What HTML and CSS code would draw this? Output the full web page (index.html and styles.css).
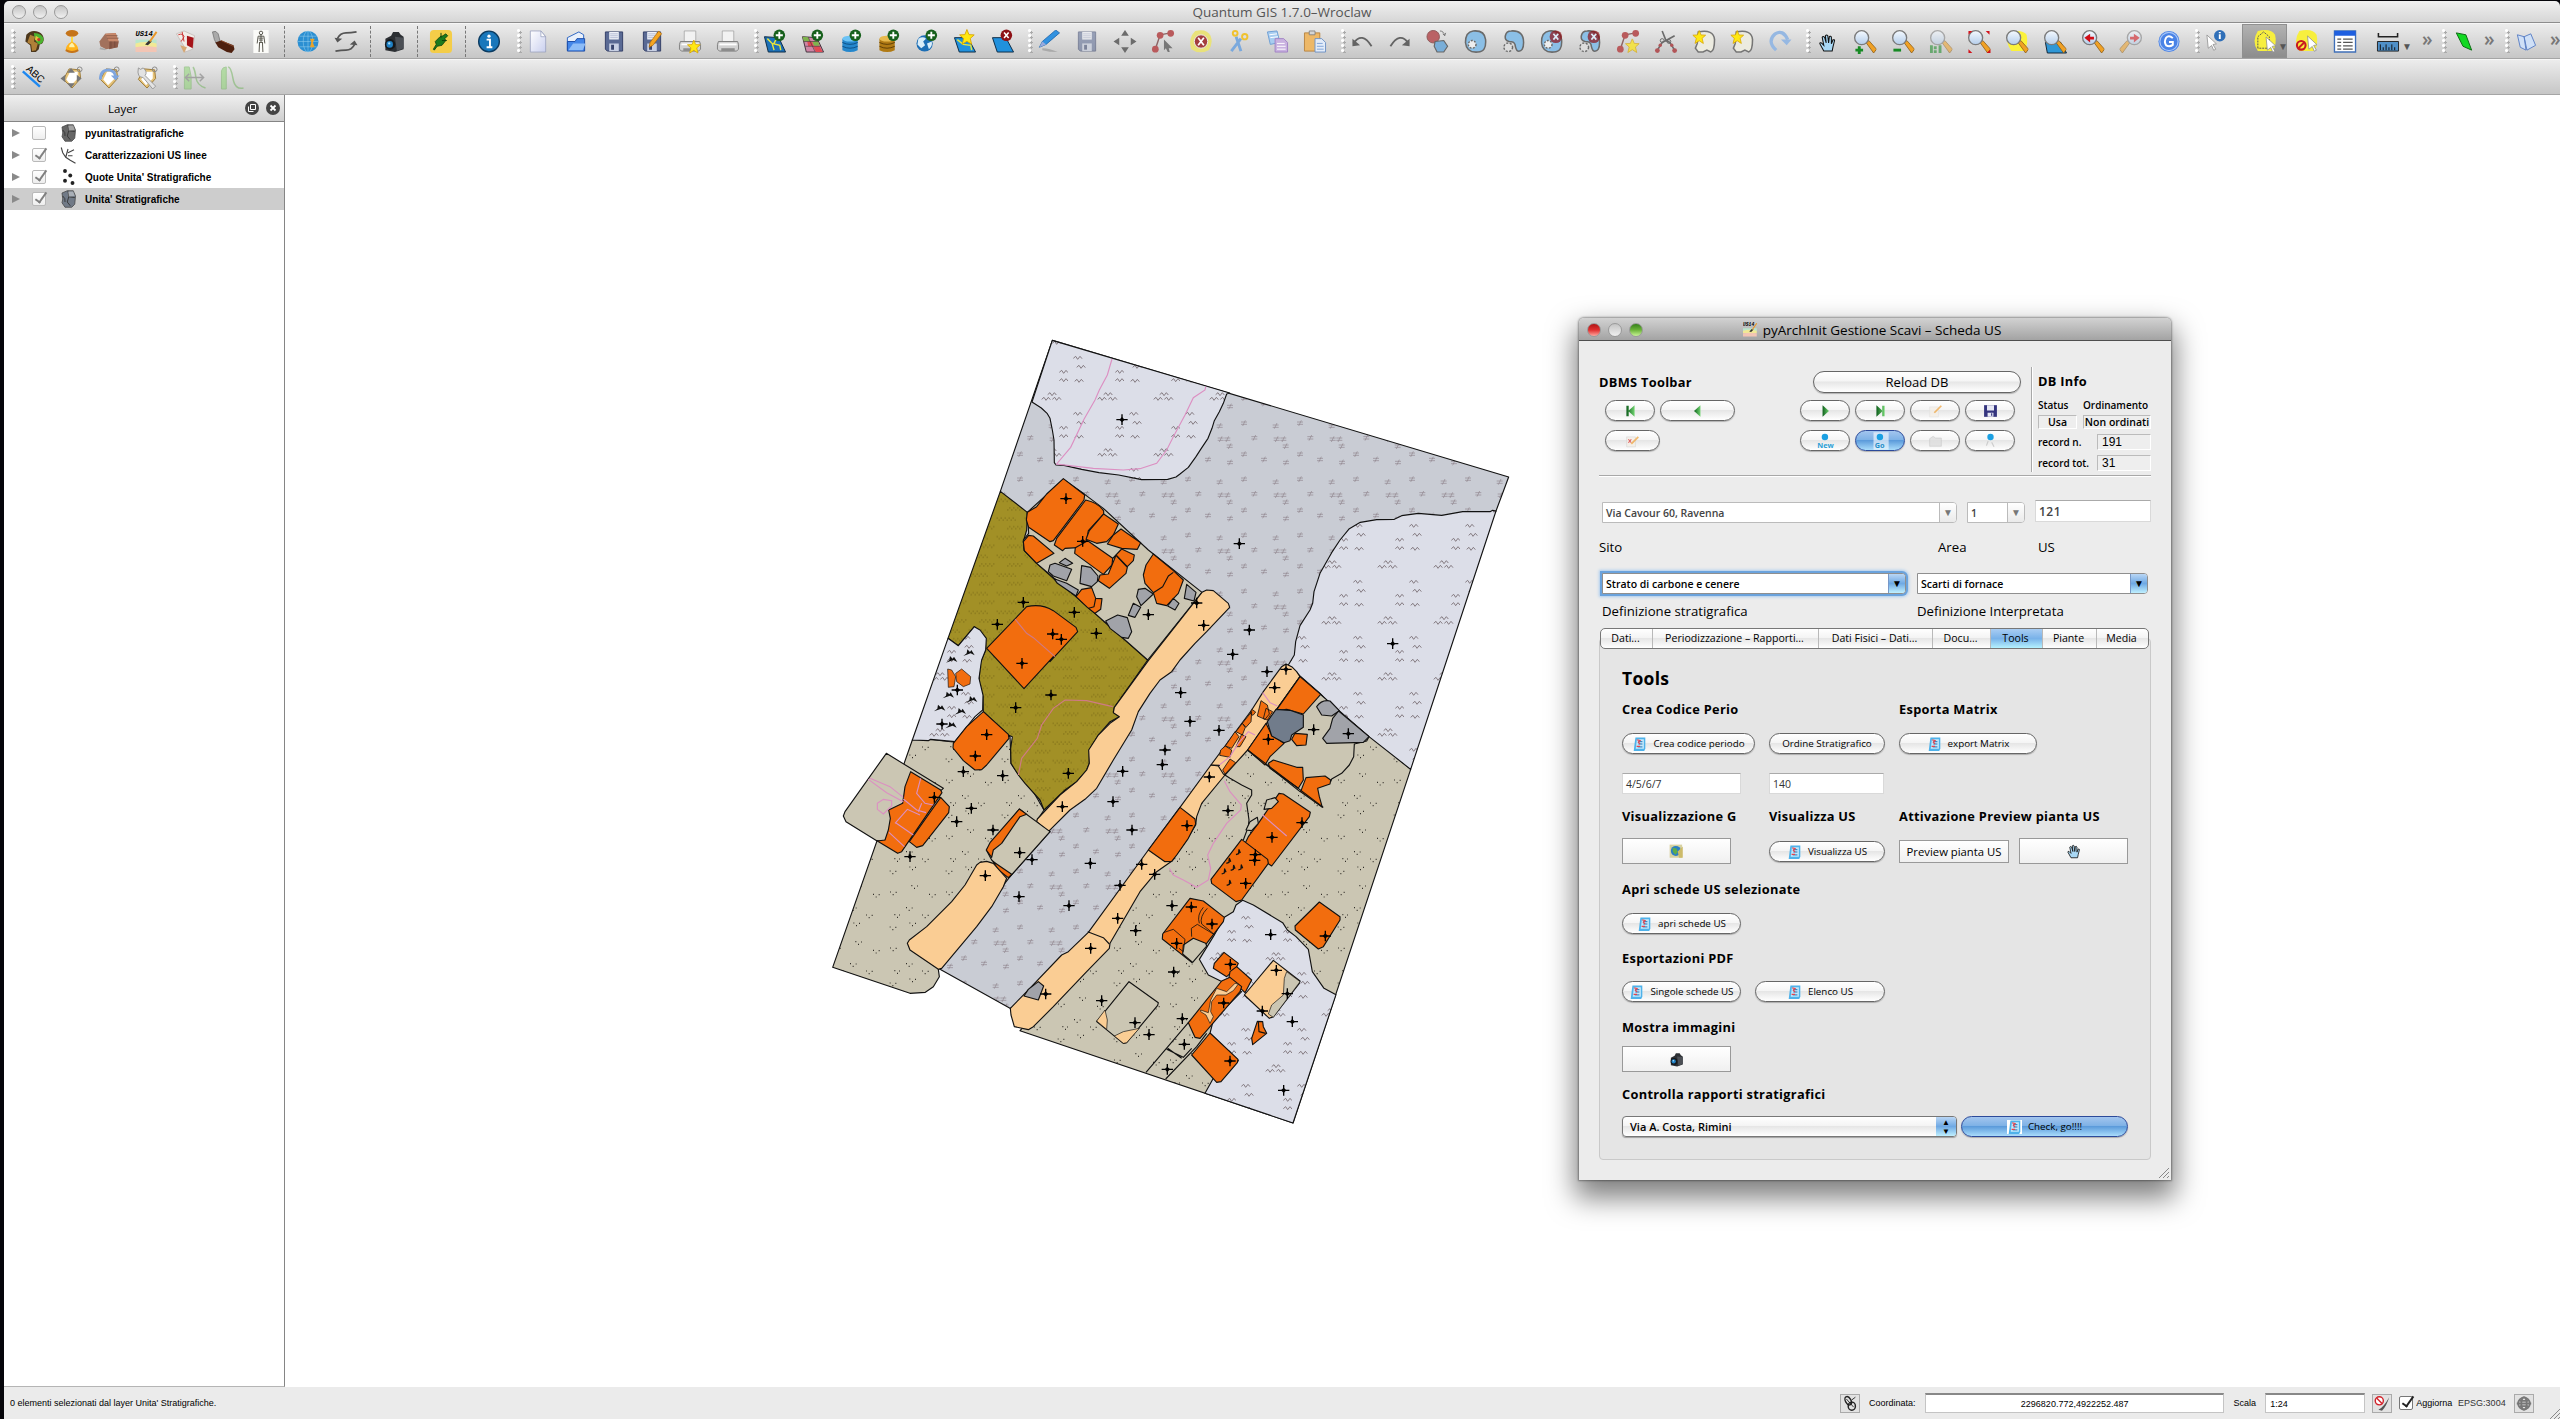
FILE: index.html
```html
<!DOCTYPE html>
<html lang="it">
<head>
<meta charset="utf-8">
<title>Quantum GIS 1.7.0–Wroclaw</title>
<link rel="stylesheet" href="styles.css">
</head>
<body>
<svg class="defs" width="0" height="0" aria-hidden="true">
<defs>
<linearGradient id="sheet" x1="0" y1="0" x2="1" y2="1"><stop offset="0" stop-color="#fff"/><stop offset="1" stop-color="#c9cfee"/></linearGradient>
<linearGradient id="glass" x1="0" y1="0" x2="0" y2="1"><stop offset="0" stop-color="#f5faff"/><stop offset="1" stop-color="#b4cdea"/></linearGradient>
<linearGradient id="leaf" x1="0" y1="0" x2="1" y2="0"><stop offset="0" stop-color="#0e5f1c"/><stop offset="1" stop-color="#6fd36f"/></linearGradient>
<symbol id="plus" viewBox="0 0 12 12"><circle cx="6" cy="6" r="5.6" fill="#17601c"/><path d="M6 2.6v6.8M2.6 6h6.8" stroke="#fff" stroke-width="1.8"/></symbol>
<symbol id="kill" viewBox="0 0 12 12"><circle cx="6" cy="6" r="5.6" fill="#8d1015"/><path d="M3.8 3.4l4.4 5.2M8.2 3.4L3.8 8.6" stroke="#fff" stroke-width="1.5"/></symbol>
<symbol id="star" viewBox="0 0 12 12"><path d="M6 0l1.6 4 4.2.2-3.2 2.8 1.1 4.6L6 9.2l-3.700 2.400 1.100-4.600L.2 4.200l4.200-.2z" fill="#ffe812" stroke="#d9a400" stroke-width=".7"/></symbol>
<symbol id="mask" viewBox="0 0 24 24"><path d="M4 5q5-6 13-3 6 3 5 9-1 4-4 4l-1 5-3 3H9l-1-7-5-4z" fill="#4c371c"/><path d="M12 3q9 0 10 7-1 5-5 5-5-4-5-12z" fill="#4bb32f"/><path d="M8 5l5 2-1 5 4 2-2 7-4 1-1-7-4-2z" fill="#b08038"/><path d="M14 6l3 2-1 4-3-2z" fill="#e9c23a"/><circle cx="17" cy="10" r="1.700" fill="#c9362a"/></symbol>
<symbol id="hourglass" viewBox="0 0 24 24"><ellipse cx="12" cy="3.500" rx="6.500" ry="3.500" fill="#c5741a"/><path d="M11 7h2v6h-2z" fill="#ffda3a"/><path d="M12 12q7 4 6.500 9-6.500 5-13 0Q5 16 12 12z" fill="#ffb31c"/><path d="M12 13q3 3 3 5l-6 0q0-3 3-5z" fill="#fff3a8"/><path d="M5.500 21q6.500 4 13 0" stroke="#c5741a" stroke-width="2" fill="none"/></symbol>
<symbol id="house" viewBox="0 0 24 24"><path d="M2 12l6-8 11-1 3 9-1 6-12 2-6-3z" fill="#a2715c"/><path d="M8 4l11-1 3 9H12z" fill="#c9896b"/><path d="M12 12h10l-1 6-9 2z" fill="#8d5a48"/><path d="M9 6h12M10 8.500h12M14 12v7M18 12v6" stroke="#6d4536" stroke-width=".7"/><path d="M3 18l6 2-1 1-6-1z" fill="#aaa"/></symbol>
<symbol id="us14" viewBox="0 0 24 24"><text x="0" y="6" font-size="7.500" font-weight="bold" font-style="italic" font-family="Liberation Mono">US14</text><path d="M0 10h22v5H0z" fill="#b9e6cc"/><path d="M0 14q11-3 22 0v4H0z" fill="#f1e995"/><path d="M0 18q11-2 22 0v5H0z" fill="#f3c5b4"/><path d="M10 15l4-4 3 1-4 4z" fill="#333"/><path d="M15 12l7-10" stroke="#e9972a" stroke-width="2"/></symbol>
<symbol id="card" viewBox="0 0 24 24"><path d="M3 4l8-3 11 5-2 14-8 3-1-6z" fill="#f1ece8" stroke="#b7aca6" stroke-width=".6"/><path d="M14 6l7 2-1 11-6-3z" fill="#a51218"/><path d="M5 5q5-2 6 2l-3 5M9 2l2 10" stroke="#c33" fill="none"/><path d="M7 16l7 2-3 6z" fill="#d6a773"/></symbol>
<symbol id="trowel" viewBox="0 0 24 24"><path d="M1 2q4-2 6 2l2 8-4 2-2-4z" fill="#aaa" stroke="#666" stroke-width=".7"/><path d="M4 13l6-2 13 5 1 4-3 4-5-1-9-5z" fill="#4e200f"/><path d="M10 11l13 6" stroke="#8c4a2c"/></symbol>
<symbol id="skeleton" viewBox="0 0 24 24"><path d="M4 0h16v24H4z" fill="#fbfbf8"/><g stroke="#55544a" fill="none"><circle cx="12" cy="3" r="1.800"/><path d="M12 5v8M9 6.500h6M9.500 8.500h5M10 10.500h4M9 6.500L8 14M15 6.500L16 14M10 13h4M10.500 13l-.5 10M13.500 13l.5 10"/></g></symbol>
<symbol id="globe" viewBox="0 0 24 24"><circle cx="12" cy="12" r="11" fill="#2b8fd2"/><g stroke="#9fd4f0" fill="none" stroke-width=".5"><ellipse cx="12" cy="12" rx="5" ry="11"/><path d="M1 12h22M3 6.500h18M3 17.500h18M12 1v22"/></g><path d="M14 9h5l-2 4 2 5h-5l1.500-5z" fill="#eaa42a"/></symbol>
<symbol id="sync" viewBox="0 0 24 24"><g fill="none" stroke="#555" stroke-width="1.800"><path d="M3 9q3-6 9-6 5 0 11-1M21 15q-3 6-9 6-5 0-11 1"/></g><path d="M0 8l3 5 5-4zM24 16l-3-5-5 4z" fill="#555"/></symbol>
<symbol id="camera" viewBox="0 0 24 24"><path d="M3 9l6-3 2-4h6l2 3 3 2v13l-9 3-10-2z" fill="#2c2f33"/><path d="M13 7l9 1v11l-7 3z" fill="#4b4f55"/><circle cx="8" cy="15" r="5.500" fill="#15181b"/><circle cx="7.500" cy="15" r="3.400" fill="#1f80c4"/><circle cx="7" cy="14" r="1.200" fill="#a7dcf7"/></symbol>
<symbol id="plug" viewBox="0 0 24 24"><rect x=".5" y="0" width="23" height="24" rx="4" fill="#f4cd48"/><path d="M17 4l2 2-3 3 1 2-4 5-5 1-3 4-1-1 3-5-1-3 5-5 3-1z" fill="#1d7a1c" stroke="#0b3f0b" stroke-width=".8"/><path d="M12 3v5M18 11h-5" stroke="#0b3f0b"/></symbol>
<symbol id="info" viewBox="0 0 24 24"><circle cx="12" cy="12" r="10.800" fill="#1877bb" stroke="#0b3b61" stroke-width="1.400"/><circle cx="12" cy="6.500" r="1.700" fill="#fff"/><path d="M9.500 10h3.500v7.500M9.500 18h6" stroke="#fff" stroke-width="2" fill="none"/></symbol>
<symbol id="doc" viewBox="0 0 24 24"><path d="M4 1h11l5 6v16H4z" fill="url(#sheet)" stroke="#98a0bd" stroke-width=".8"/><path d="M15 1v6h5z" fill="#fff" stroke="#98a0bd" stroke-width=".8"/></symbol>
<symbol id="open" viewBox="0 0 24 24"><path d="M3 8L15 2l5 3v16H3z" fill="#e9f0fb" stroke="#2a63c2"/><path d="M3 22V12h8l2-3h8v13z" fill="#4486e8" stroke="#1b4ba6"/><path d="M4 21l5-7h13l-3 7z" fill="#8dbcf7"/></symbol>
<symbol id="save" viewBox="0 0 24 24"><path d="M3 2h18v20H5l-2-2z" fill="#5a6a94" stroke="#323f66"/><path d="M7 2h10v8H7z" fill="#eef1f8"/><path d="M8 4h8M8 6h8M8 8h8" stroke="#9aa5c4" stroke-width=".7"/><path d="M7 14h10v8H7z" fill="#c8d0e4"/><path d="M9 15.500h3v5H9z" fill="#38456e"/></symbol>
<symbol id="pencil" viewBox="0 0 24 24"><path d="M9 18l1-5L19 1l3 3-9 12z" fill="#f5a623" stroke="#a86406" stroke-width=".7"/></symbol>
<symbol id="print" viewBox="0 0 24 24"><path d="M6 1h12v11H6z" fill="#f2f2f2" stroke="#999" stroke-width=".7"/><path d="M2 12h20l1 3v5l-2 2H3l-2-2v-5z" fill="#d2d2d2" stroke="#777" stroke-width=".9"/><path d="M3 15h18" stroke="#fff" stroke-width="2"/><path d="M5 19h14v3H5z" fill="#8c8c8c"/></symbol>
<symbol id="vlayer" viewBox="0 0 24 24"><path d="M1 7l15 1 7 15H5z" fill="#1c70b8" stroke="#0c2a44"/><path d="M4 9l5 5 8 2 1 5M9 14l2 7M13 10l-2 4" stroke="#e7e63a" stroke-width="1.500" fill="none"/></symbol>
<symbol id="rlayer" viewBox="0 0 24 24"><path d="M1 7l15 1 7 15H5z" fill="#cf86a6" stroke="#40303a"/><path d="M1 7l6 .5 2 4.500-6.500 0zM11 12l6-.5 2 5-6 0z" fill="#7eb34c"/><path d="M6 12l5 0 2 5-6 0zM12 17h7l3 6h-7z" fill="#df4a54"/><path d="M2.500 12h15.500M4 17h16M7 7.500l7 15" stroke="#40303a" stroke-width=".6"/></symbol>
<symbol id="dbblue" viewBox="0 0 24 24"><path d="M3 9v12q8 4 16 0V9z" fill="#2587cc"/><ellipse cx="11" cy="9" rx="8" ry="3" fill="#6cc3f5"/><path d="M3 13q8 4 16 0M3 17q8 4 16 0" stroke="#0c4f86" fill="none"/></symbol>
<symbol id="dbgold" viewBox="0 0 24 24"><path d="M2 9v12q8 4 16 0V9z" fill="#b07a14"/><ellipse cx="10" cy="9" rx="8" ry="3" fill="#e7b94d"/><path d="M2 13q8 4 16 0M2 17q8 4 16 0" stroke="#5e3e05" fill="none"/></symbol>
<symbol id="wms" viewBox="0 0 24 24"><circle cx="9.500" cy="14" r="8.500" fill="#1c6eb5"/><path d="M3 9q5-3 8 0l-3 3 2 4-4 3-4-4zM12 14l5-2q1 5-3 8z" fill="#d8ecf8"/></symbol>
<symbol id="blayer" viewBox="0 0 24 24"><path d="M1 8l14 0 8 15H6z" fill="#2191dd" stroke="#0c2a44"/></symbol>
<symbol id="pen" viewBox="0 0 24 24"><path d="M5 19q8 0 16 4-9 0-16-2z" fill="#aaa"/><path d="M2 18l3-6L19 0l4 3L9 15z" fill="#3292e0" stroke="#1b62a8" stroke-width=".8"/><path d="M2 18l3-6 4 3z" fill="#9ad"/></symbol>
<symbol id="move" viewBox="0 0 24 24"><path d="M12 0l4 6H8zM12 24l4-6H8zM0 12l6-4v8zM24 12l-6-4v8z" fill="#6c6c6c"/></symbol>
<symbol id="nodes" viewBox="0 0 24 24"><path d="M4 20L9 5l11-2" stroke="#8d6565" stroke-width="1.500" fill="none"/><g fill="#b95a5c"><circle cx="4" cy="20" r="3.500"/><circle cx="9" cy="5.500" r="3.500"/><circle cx="20" cy="3.500" r="3.500"/></g></symbol>
<symbol id="delsel" viewBox="0 0 24 24"><path d="M6 1q12-3 16 5 3 8-2 15-10 5-18-1-4-11 4-19z" fill="#e9e27a"/><circle cx="12" cy="12" r="7" fill="#a33e3e" stroke="#eee"/><path d="M9 8l6 8M15 8l-6 8" stroke="#fff" stroke-width="1.800"/></symbol>
<symbol id="cut" viewBox="0 0 24 24"><path d="M9 7l5 15M14 9L4 22" stroke="#7aa9dd" stroke-width="3"/><g fill="none" stroke="#f0c22f" stroke-width="2"><circle cx="8" cy="3.500" r="2.500"/><circle cx="18" cy="7" r="2.800"/></g></symbol>
<symbol id="copy" viewBox="0 0 24 24"><path d="M2 2l10-1 3 12-10 2z" fill="#a8cdf0" stroke="#6f9fd4"/><path d="M10 9h9l4 4v10H10z" fill="#c9b2e0" stroke="#a183c4"/><path d="M4 5l8-1M5 8l8-1M12 14h8M12 17h9M12 20h9" stroke="#fff"/></symbol>
<symbol id="paste" viewBox="0 0 24 24"><path d="M1 3h16v19H1z" fill="#edb868" stroke="#b98643"/><path d="M6 1h6v4H6z" fill="#d5d5d5" stroke="#777" stroke-width=".8"/><path d="M12 9h7l4 4v10H12z" fill="#e3ecf9" stroke="#6f92c4"/><path d="M14 14h6M14 17h7M14 20h7" stroke="#7fa4d8"/></symbol>
<symbol id="undo" viewBox="0 0 24 24"><path d="M3 14q9-13 19 3" stroke="#636363" stroke-width="1.900" fill="none"/><path d="M2 9l0 8 8-1z" fill="#636363"/></symbol>
<symbol id="simplify" viewBox="0 0 24 24"><circle cx="7" cy="7" r="6.500" fill="#ba6265" stroke="#8f5a5a"/><path d="M9 12l9-1 4 6-4 6h-7l-3-6z" fill="#79aed8" stroke="#666" stroke-width="1.200"/><path d="M14 1q4 0 5 5M17 4l2 2 1-3" stroke="#777" fill="none"/></symbol>
<symbol id="blob" viewBox="0 0 24 24"><path d="M9 1q12-1 13 9 1 13-8 13-12 1-13-10Q1 2 9 1z" fill="#8bbfe6" stroke="#6a6a6a" stroke-width="1.600"/><circle cx="8" cy="15" r="4" fill="#eee" stroke="#6a6a6a" stroke-width="1.500" stroke-dasharray="2 1.400"/></symbol>
<symbol id="blob2" viewBox="0 0 24 24"><path d="M9 1q13-1 13 12 0 10-6 9-2-1-3-7-1-3-6-3-5-1-4-6 1-5 6-5z" fill="#8bbfe6" stroke="#6a6a6a" stroke-width="1.600"/><circle cx="6" cy="18" r="4.500" fill="#ddd" stroke="#6a6a6a" stroke-width="1.500" stroke-dasharray="2.200 1.500"/></symbol>
<symbol id="scissor" viewBox="0 0 24 24"><path d="M3 21l5-8 4-2 9-5M21 21l-5-8-4-2-4-10" stroke="#6b6b6b" stroke-width="1.700" fill="none"/><circle cx="8" cy="11" r="2" fill="none" stroke="#6b6b6b"/><circle cx="15" cy="12" r="2" fill="none" stroke="#6b6b6b"/><g fill="#b25558"><circle cx="3" cy="21.500" r="2.500"/><circle cx="21" cy="21.500" r="2.500"/><circle cx="18" cy="16" r="1.800"/><circle cx="6" cy="16" r="1.800"/></g></symbol>
<symbol id="merge" viewBox="0 0 24 24"><path d="M6 2q16-3 17 8 0 12-4 13l-4-2-4 2H6l-3-4 2-5z" fill="#ecebe0" stroke="#757575" stroke-width="1.600"/><use href="#star" x="0" y="0" width="14" height="15"/></symbol>
<symbol id="rotate" viewBox="0 0 24 24"><path d="M8 21Q-2 12 7 4q8-5 13 6" stroke="#96b8e2" stroke-width="3.500" fill="none"/><path d="M13 10h11l-5 6z" fill="#96b8e2"/></symbol>
<symbol id="hand" viewBox="0 0 24 24"><path d="M8 22l-5-9q0-2 2-1l3 3L6 5q1-2 3 0l2 7-1-9q1.500-2 3 0l1 9 1-8q2-1 2.500 1l0 8 2-5q2-.5 2 1l-2 8-1 5z" fill="#a9d8f5" stroke="#111" stroke-width="1.300"/></symbol>
<symbol id="lens" viewBox="0 0 24 24"><path d="M13 13l3-2 8 9-3 4z" fill="#f0a125" stroke="#8a5a14" stroke-width=".8"/><circle cx="8.500" cy="8" r="7.300" fill="url(#glass)" stroke="#7b7b7b" stroke-width="1.400"/></symbol>
<symbol id="cursor" viewBox="0 0 24 24"><path d="M5 1l14 13-5 1 4 7-3 1.500-3-7-5 4z" fill="#fff" stroke="#8a8a8a" stroke-width="1.100"/></symbol>
<symbol id="google" viewBox="0 0 24 24"><circle cx="12" cy="12" r="11" fill="#4a83e6"/><circle cx="12" cy="12" r="9.500" fill="none" stroke="#a9c6f7" stroke-width="1.200"/><path d="M16 8.500Q12 5 9 8q-2.500 4 0 8 3.500 2 7-.5V12.500H12" stroke="#fff" stroke-width="2" fill="none"/></symbol>
<symbol id="table" viewBox="0 0 24 24"><path d="M1 1h22v22H1z" fill="#fff" stroke="#3f6fb8" stroke-width="1.400"/><path d="M1 1h22v5H1z" fill="#1e5fe0"/><path d="M4 9.500h4M10 9.500h10M4 13h4M10 13h10M4 16.500h4M10 16.500h10M4 20h4M10 20h10" stroke="#555" stroke-width="1.300"/></symbol>
<symbol id="measure" viewBox="0 0 24 24"><path d="M2 3v4h20V3" stroke="#222" stroke-width="1.600" fill="none"/><path d="M1 12h22v10H1z" fill="#4f90c8" stroke="#222"/><path d="M4 21v-6M7 21v-3M10 21v-6M13 21v-3M16 21v-6M19 21v-3" stroke="#111"/></symbol>
<symbol id="page" viewBox="0 0 24 24"><path d="M5 1h17v19l-2 4H2z" fill="#4fb2ea"/><path d="M7.500 4h12v16H5.500z" fill="#c3e8fb"/><path d="M10 8h7M10 12h7M9 17h8" stroke="#2277b8" stroke-width="1.700"/><path d="M8 5l5 1-3 3 3 3M7 16h6" stroke="#e2444e" stroke-width="1.900" fill="none"/></symbol>
<symbol id="tag" viewBox="0 0 24 24"><path d="M3 14L9 3l11 1 1 9-9 10z" fill="#e5c277" stroke="#9d7a37"/><path d="M6 14l4-8 8 0 0 7-7 7z" fill="#fff"/><circle cx="20" cy="3.500" r="2.500" fill="none" stroke="#888"/></symbol>
<symbol id="lump" viewBox="0 0 24 24"><path d="M4 4l7-3 8 0 3 7-1 11-4 4-9 0-4-6 1-5z" fill="currentColor" stroke="#444"/><path d="M12 1l1 8 8 1M13 9l-2 7 4 5M5 8q4 3 3 8" fill="none" stroke="#333" stroke-width="1.200"/><path d="M12 2l7 0 2 6-8 1z" fill="#fff" opacity=".4"/></symbol>
<marker id="cross" viewBox="-18 -18 36 36" markerWidth="36" markerHeight="36" markerUnits="userSpaceOnUse" overflow="visible"><path d="M-17 0H17M0-16V16" stroke="#000" stroke-width="4"/><path d="M0-8L8 0 0 8-8 0z"/></marker>
<pattern id="wave" width="168" height="168" patternUnits="userSpaceOnUse" patternTransform="translate(1080 120)">
<rect width="168" height="168" fill="#dcdee8"/>
<path fill="none" stroke="#75696f" stroke-width="2.600" d="M16 163l7-6 6 9 7-9 6 7M26 22l7-6 6 9 7-9 6 7M142 37l7-6 6 9 7-9 6 7M142 62l7-6 6 9 7-9 6 7M20 64l7-6 6 9 7-9 6 7M107 104l7-6 6 9 7-9 6 7M89 118l7-6 6 9 7-9 6 7M121 118l7-6 6 9 7-9 6 7"/>
</pattern>
<pattern id="wave2" href="#wave" patternTransform="translate(540 -1380)"/>
<pattern id="hash" width="168" height="168" patternUnits="userSpaceOnUse" patternTransform="translate(1080 120)">
<rect width="168" height="168" fill="#c9ccd4"/>
<g fill="none" stroke="#8f858d" stroke-width="2"><path d="M15 18h18M15 25h18M20 30l8-17M110 27h18M110 34h18M115 38l8-17M46 62h18M46 69h18M51 74l8-17M113 66h18M113 73h18M118 78l8-17M133 66h18M133 73h18M138 78l8-17M140 87h18M140 94h18M145 99l8-17M15 111h18M15 118h18M20 123l8-17M75 127h18M75 134h18M80 139l8-17M141 136h18M141 143h18M146 148l8-17"/></g>
</pattern>
<pattern id="dots" width="168" height="168" patternUnits="userSpaceOnUse" patternTransform="translate(1080 120)">
<rect width="168" height="168" fill="#cbc6b3"/>
<path fill="none" stroke="#33302a" stroke-width="3.400" d="M137 21h3M154 22h3M145 29h3M34 65h3M51 66h3M42 73h3M87 91h3M104 92h3M95 99h3M18 131h3M35 132h3M26 139h3M66 153h3M83 154h3M74 161h3M28 9h3M45 10h3M36 17h3M138 84h3M155 85h3M146 92h3M151 152h3M165 153h3M159 160h3"/>
</pattern>
<pattern id="olive" width="84" height="56" patternUnits="userSpaceOnUse" patternTransform="translate(528 520)">
<rect width="84" height="56" fill="#a29026"/>
<path fill="none" stroke="#66590f" stroke-width="2.600" d="M2 18h3M14 18h3M26 18h3M38 18h3M50 18h3M8 24h3M20 24h3M32 24h3M44 24h3M56 24h3M40 44h3M52 44h3M64 44h3M76 44h3M34 50h3M46 50h3M58 50h3M70 50h3"/>
</pattern>
</defs>
</svg>

<div class="window">
<header class="titlebar"><div class="lights"><i></i><i></i><i></i></div><span class="win-title">Quantum GIS 1.7.0–Wroclaw</span></header>

<nav class="toolbar main-tools">
<div class="group g1"><i class="handle"></i>
<svg><use href="#mask"/></svg><svg><use href="#hourglass"/></svg><svg><use href="#house"/></svg><svg><use href="#us14"/></svg><svg><use href="#card"/></svg><svg><use href="#trowel"/></svg><svg><use href="#skeleton"/></svg><i class="sep"></i><svg><use href="#globe"/></svg><svg><use href="#sync"/></svg><i class="sep"></i><svg><use href="#camera"/></svg><i class="sep"></i><svg><use href="#plug"/></svg><i class="sep"></i><svg><use href="#info"/></svg></div>
<div class="group"><i class="handle"></i>
<svg><use href="#doc"/></svg><svg><use href="#open"/></svg><svg viewBox="0 0 24 24"><use href="#save"/></svg><svg viewBox="0 0 24 24"><use href="#save"/><use href="#pencil"/></svg><svg viewBox="0 0 24 24"><use href="#print"/><use href="#star" x="9" y="10" width="14" height="15"/></svg><svg><use href="#print"/></svg></div>
<div class="group"><i class="handle"></i>
<svg viewBox="0 0 24 24"><use href="#vlayer"/><use href="#plus" x="10" y="-1" width="13" height="13"/></svg><svg viewBox="0 0 24 24"><use href="#rlayer"/><use href="#plus" x="10" y="-1" width="13" height="13"/></svg><svg viewBox="0 0 24 24"><use href="#dbblue"/><use href="#plus" x="10" y="-1" width="13" height="13"/></svg><svg viewBox="0 0 24 24"><use href="#dbgold"/><use href="#plus" x="10" y="-1" width="13" height="13"/></svg><svg viewBox="0 0 24 24"><use href="#wms"/><use href="#plus" x="10" y="-1" width="13" height="13"/></svg><svg viewBox="0 0 24 24"><use href="#blayer"/><path d="M4 10l6 5 8 1 1 5" stroke="#e7e63a" stroke-width="1.500" fill="none"/><use href="#star" x="6" y="-1" width="16" height="17"/></svg><svg viewBox="0 0 24 24"><use href="#blayer"/><use href="#kill" x="9" y="-1" width="13" height="13"/></svg></div>
<div class="group"><i class="handle"></i>
<svg><use href="#pen"/></svg><svg class="dim"><use href="#save"/></svg><svg><use href="#move"/></svg><svg viewBox="0 0 24 24"><use href="#nodes"/><path d="M13 10l9 9-4 0 1 4-2 0-2-4-2 2z" fill="#777"/></svg><svg><use href="#delsel"/></svg><svg><use href="#cut"/></svg><svg><use href="#copy"/></svg><svg><use href="#paste"/></svg></div>
<div class="group"><i class="handle"></i>
<svg><use href="#undo"/></svg><svg class="flip"><use href="#undo"/></svg><svg><use href="#simplify"/></svg><svg><use href="#blob"/></svg><svg><use href="#blob2"/></svg><svg viewBox="0 0 24 24"><use href="#blob"/><use href="#kill" x="9" y="0" width="14" height="14" opacity=".7"/></svg><svg viewBox="0 0 24 24"><use href="#blob2"/><use href="#kill" x="9" y="0" width="14" height="14" opacity=".7"/></svg><svg viewBox="0 0 24 24"><use href="#nodes"/><use href="#star" x="9" y="9" width="15" height="15" opacity=".7"/></svg><svg><use href="#scissor"/></svg><svg><use href="#merge"/></svg><svg><use href="#merge"/></svg><svg><use href="#rotate"/></svg></div>
<div class="group"><i class="handle"></i>
<svg viewBox="0 0 24 24"><use href="#hand" x="2" y="3" width="20" height="21"/></svg><svg viewBox="0 0 24 24"><use href="#lens"/><path d="M6 17v8M2 21h8" stroke="#178a24" stroke-width="3"/></svg><svg viewBox="0 0 24 24"><use href="#lens"/><path d="M2 21h8" stroke="#178a24" stroke-width="3"/></svg><svg class="dim" viewBox="0 0 24 24"><use href="#lens"/><path d="M2 16v8M6 17v3M6 21v3M11 16v8" stroke="#178a24" stroke-width="3"/></svg><svg viewBox="0 0 24 24"><use href="#lens"/><path d="M1 1l4 0-4 4zM23 1l-4 0 4 4zM1 24v-4l4 4zM24 24v-4l-4 4z" fill="#d3121b"/></svg><svg viewBox="0 0 24 24"><path d="M4 2q14-3 18 3 2 9-2 17H6Q-1 12 4 2z" fill="#fbf23a"/><use href="#lens"/></svg><svg viewBox="0 0 24 24"><path d="M2 13h16l6 11H4z" fill="#2f97d6" stroke="#123"/><use href="#lens"/></svg><svg viewBox="0 0 24 24"><use href="#lens"/><path d="M3 8l6-4v3h4v3H9v3z" fill="#d10d16"/></svg><svg class="dim flip" viewBox="0 0 24 24"><use href="#lens"/><path d="M13 8l-6-4v3H3v3h4v3z" transform="translate(16 0) scale(-1 1)" fill="#d10d16"/></svg><svg><use href="#google"/></svg></div>
<div class="group g7"><i class="handle"></i>
<svg viewBox="0 0 24 24"><use href="#cursor" x="0" y="4" width="17" height="18"/><circle cx="17" cy="6" r="6" fill="#2f6fb8"/><path d="M17 4.500v5M17 2v1.500" stroke="#fff" stroke-width="2"/></svg>
<div class="pressed"><svg viewBox="0 0 24 24"><path d="M4 1q14-3 18 4 2 9-2 17H4Q-3 12 4 1z" fill="#f7ef3e"/><path d="M4 19V7l6-5 6 5v12z" fill="none" stroke="#555" stroke-dasharray="2 1"/><use href="#cursor" x="9" y="6" width="17" height="18"/></svg><b>▼</b></div>
<svg viewBox="0 0 24 24"><path d="M4 1q14-3 18 4 2 9-2 17H4Q-3 12 4 1z" fill="#f7ef3e"/><circle cx="6" cy="16" r="4.500" fill="none" stroke="#c91a20" stroke-width="2.200"/><path d="M3 19l6-6" stroke="#c91a20" stroke-width="2"/><use href="#cursor" x="9" y="5" width="17" height="18"/></svg><svg><use href="#table"/></svg><svg class="wide"><use href="#measure"/></svg><b class="drop">▼</b><b class="more">»</b></div>
<div class="group g8"><i class="handle"></i><svg viewBox="0 0 24 24"><path d="M5 3l10 2 6 16-9-4z" fill="#12d922" stroke="#0a6a12"/></svg><b class="more">»</b></div>
<div class="group g8"><i class="handle"></i><svg viewBox="0 0 24 24"><path d="M3 5l7 2 2 14-6-3zM10 7l7-3 5 12-9 5z" fill="#cfe0f7" stroke="#5b80c4"/></svg><b class="more last">»</b></div>
</nav>

<nav class="toolbar label-tools">
<div class="group g1"><i class="handle"></i>
<svg viewBox="0 0 24 24"><g transform="rotate(42 12 12)"><text x="0" y="12" font-size="10.500" font-family="Liberation Sans">ABC</text><path d="M-1 15h24" stroke="#1e88f0" stroke-width="2.500"/></g></svg>
<svg viewBox="0 0 24 24"><use href="#tag"/><path d="M11 2l4 5H7zM11 23l4-5H7zM0 13l5-4v8zM22 13l-5-4v8z" fill="#777"/></svg>
<svg viewBox="0 0 24 24"><use href="#tag"/><path d="M3 14q0-10 9-10 6 1 7 7" stroke="#7ea5de" stroke-width="3" fill="none"/><path d="M14 10h9l-4 5z" fill="#7ea5de"/></svg>
<svg viewBox="0 0 24 24"><use href="#tag"/><path d="M3 2q2 3 5 0 5 4 2 8l11 11-3 3L8 12Q1 12 3 2z" fill="#e3e3e3" stroke="#999"/></svg></div>
<div class="group"><i class="handle"></i>
<svg class="dim" viewBox="0 0 24 24"><path d="M2 24V1h5l2 10v13z" fill="#8fd675" stroke="#76b562"/><path d="M11 1q2 3 3 11t10 11" stroke="#76b562" stroke-width="1.600" fill="none"/><path d="M3 12h18M7 8l-4 4 4 4M18 8l4 4-4 4" stroke="#777" stroke-width="1.500" fill="none"/></svg>
<svg class="dim" viewBox="0 0 24 24"><path d="M1 24V5q1-4 5-4v23z" fill="#8fd675" stroke="#76b562"/><path d="M8 1q3 0 5 12t11 10" stroke="#76b562" stroke-width="1.600" fill="none"/></svg></div>
</nav>

<main class="work">
<aside class="layers">
<div class="dock-head"><span>Layer</span><svg viewBox="0 0 14 14"><circle cx="7" cy="7" r="7" fill="#444"/><path d="M5.500 3.500h5v5h-5zM3.500 5.500v5h5" fill="none" stroke="#fff"/></svg><svg viewBox="0 0 14 14"><circle cx="7" cy="7" r="7" fill="#444"/><path d="M4.500 4.500l5 5M9.500 4.500l-5 5" stroke="#fff" stroke-width="1.800"/></svg></div>
<ul>
<li><i class="tri"></i><i class="box"></i><svg class="lay dark"><use href="#lump"/></svg>pyunitastratigrafiche</li>
<li><i class="tri"></i><i class="box on"></i><svg class="lay" viewBox="0 0 24 24"><path d="M3 2l2 7 4 6 6 4 7 4M9 15l3-11M12 9l8-4M12 13h6" fill="none" stroke="#444" stroke-width="1.500"/></svg>Caratterizzazioni US linee</li>
<li><i class="tri"></i><i class="box on"></i><svg class="lay" viewBox="0 0 24 24"><g fill="#222"><circle cx="8" cy="4" r="2.600"/><circle cx="15" cy="10" r="2.600"/><circle cx="8" cy="17" r="2.600"/><circle cx="18" cy="20" r="2.600"/></g></svg>Quote Unita' Stratigrafiche</li>
<li class="sel"><i class="tri"></i><i class="box on"></i><svg class="lay slate"><use href="#lump"/></svg>Unita' Stratigrafiche</li>
</ul>
</aside>

<section class="canvas">
<svg class="map" viewBox="0 0 2100 2460" width="700" height="820">
<g stroke="#111" stroke-width="3.400" stroke-linejoin="round">
<path fill="url(#hash)" d="M697 61L2066 471 2028 573 1440 1070 1260 1310 1100 1530 1000 1660 865 1875 640 2050 570 2065 360 1948 480 1640 650 1450 850 1180 541 514z"/>
<path fill="url(#wave)" d="M697 61L1229 219 1220 222 1210 250 1198 275 1183 302 1176 325 1164 355 1142 388 1128 410 1105 442 1080 462 1068 471 1043 478 965 479 896 465 837 458 785 448 732 436 708 435 703 428 702 360 697 330 690 295 682 281 664 264 636 246z"/>
<path fill="url(#dots)" d="M1440 1070L1772 1348 1419 2409 600 2132 850 1870 1080 1500z"/>
<path fill="url(#wave)" d="M2028 573L2018 571 2010 575 1928 575 1865 586 1795 580 1745 587 1723 598 1670 599 1621 607 1588 626 1560 660 1535 698 1500 760 1482 815 1478 850 1470 870 1440 917 1427 965 1423 1005 1405 1035 1440 1068 1500 1120 1550 1170 1647 1250 1772 1348z"/>
<path fill="url(#dots)" d="M277 1260L332 1258 400 1266 480 1350 570 1245 573 1330 600 1370 640 1415 672 1470 652 1500 690 1535 570 1670 355 1948 358 1970 340 2000 316 2017 270 2020 38 1942z"/>
<path fill="url(#olive)" d="M541 514L622 577 620 630 610 665 613 692 650 730 700 775 768 830 983 1020 883 1162 880 1175 898 1190 870 1205 835 1245 808 1290 808 1330 800 1350 770 1385 735 1410 672 1470 660 1440 615 1390 595 1365 573 1330 572 1285 577 1250 565 1245 490 1175 489 1130 477 1095 480 1030 497 990 497 955 463 920 415 977 384 955z"/>
<path fill="url(#wave)" d="M384 955L415 977 463 920 480 930 499 955 497 990 485 1020 483 1032 477 1075 489 1125 488 1170 465 1190 405 1265 332 1258 325 1262 277 1260z"/>
<path fill="#cbc6b3" d="M622 577L730 478 794 523 850 565 985 690 1146 817 983 1020 768 830 650 730 613 692 610 660 626 640z"/>
<path fill="#facd94" d="M1146 817L1160 810 1180 812 1225 850 1229 862 1160 935 1125 970 1080 1020 1055 1055 1020 1080 990 1120 955 1175 935 1230 880 1320 830 1405 795 1438 750 1470 685 1535 650 1505 652 1497 720 1425 770 1385 800 1350 808 1330 806 1290 835 1245 870 1210 898 1190 880 1178 883 1162 985 1022z"/>
</g>

<!-- upper left rubble -->
<g fill="#f26d0e" stroke="#111" stroke-width="3.400" stroke-linejoin="round">
<path d="M730 476L794 525 792 540 700 662 690 665 626 622 619 600 622 577 650 560 680 522z"/>
<path d="M797 540Q835 548 851 573L851 582 805 632 800 660 785 682 735 685 728 692 703 675 710 655z"/>
<path d="M851 582L895 612 880 645 860 665 830 670 798 658 808 632z"/>
<path d="M903 627L962 668 952 688 905 685 862 672 880 645z"/>
<path d="M803 662L878 715 876 735 850 763 764 700 766 683z"/>
<path d="M905 687L943 705 940 722 922 740 890 707 878 715z"/>
<path d="M888 706L922 742 918 760 868 805 835 782 840 765 865 762z"/>
<path d="M626 646L640 648 702 700 650 730 613 692 610 665z"/>
<path d="M768 830L785 808 815 803 827 835 846 836 842 868 825 880 802 862z"/><path fill="none" d="M827 835L822 860 806 865"/>
<path d="M1000 702L1060 752 1090 780 1075 820 1040 857 1010 850 1000 818 975 790 970 765 978 735z"/><path fill="none" d="M1060 757L1045 768 1028 800 1000 818"/>
<path d="M620 860Q665 850 700 872L768 922 773 935 690 1025 700 1010 612 1106 500 985z"/>
<path d="M490 1175L565 1243 567 1255 500 1335 485 1349 465 1350 430 1322 399 1284 400 1270 440 1220z"/>
<path fill="#cbc6b3" d="M199 1300L370 1405 190 1565 170 1562 78 1505 70 1488 75 1475z"/>
<path d="M272 1355L362 1410 366 1418 245 1595 233 1600 172 1563 195 1560 205 1530 211 1495 206 1470 248 1450 255 1400z"/>
<path d="M362 1432L388 1460 386 1478 308 1577 290 1582 268 1565z"/>
<path fill="#a1a3a9" d="M735 715L758 730 740 738 718 728zM690 735L705 730 755 748 740 782 700 768 685 755zM785 737L812 742 834 768 832 785 815 800 780 790zM702 776L740 790 775 810 768 828 712 790zM955 808L975 805 1000 822 963 857 950 830zM940 850L962 862 945 892 925 886zM1100 793L1128 817 1122 843 1093 835zM1060 835L1077 850 1065 870 1043 858zM857 903L893 885 922 893 935 935 925 955 905 952 870 925z"/>
<path d="M383 1047L395 1050 407 1070 402 1100 385 1102zM407 1060L425 1047 452 1070 450 1092 430 1100 410 1085z" stroke-width="2"/>
</g>

<!-- lower left pit and walls -->
<g transform="translate(0 900)" fill="#f26d0e" stroke="#111" stroke-width="3.400" stroke-linejoin="round">
<path fill="#cbc6b3" d="M598 567L690 635 568 772 515 720 499 690z"/>
<path d="M598 567L620 583 600 590 545 670 520 690 515 712 499 690 510 668z"/><path d="M520 725L575 763 565 773 535 750z"/>
<path fill="#facd94" d="M262 970L268 960 320 920 395 845 435 795 470 735 480 727 500 724 520 730 560 775 550 800 515 860 470 920 365 1045 355 1048 270 990z"/>
<path fill="#facd94" d="M485 140L498 132 515 140 530 155 540 170 383 390 315 465 245 550 230 590 227 615 200 660 157 722 110 755 60 815 -30 970 -32 985 -100 1055 -200 1160 -260 1220 -275 1229 -317 1220 -327 1185 -329 1165 -280 1115 -175 1005 -155 995 -95 937 85 690 180 562 275 432 395 270 430 215z" transform="translate(900 0)"/>
<path d="M1080 562L1125 597 1127 612 1105 655 1070 705 1055 724 1035 725 985 690z"/>
<path fill="none" d="M803 935L850 953 868 972M1172 435L1200 436"/>
<path fill="#a1a3a9" d="M655 1085L671 1098 655 1140 612 1128 625 1108z"/>
</g>

<!-- upper right rubble -->
<g transform="translate(1080 960)" fill="#f26d0e" stroke="#111" stroke-width="3.400" stroke-linejoin="round">
<path fill="#cbc6b3" d="M360 110L567 290 560 303 523 312 521 350 508 375 485 400 455 417 452 425 360 455 203 330z"/>
<path d="M360 110L422 163 370 222 320 208 288 212z"/>
<path d="M258 250L275 285 312 310 270 350 255 375 203 330z"/>
<path fill="#717c8b" d="M288 208L330 211 370 225 370 262 335 285 330 302 312 308 275 288 262 245z"/>
<path fill="#a1a3a9" d="M410 200Q425 178 450 183L478 212 455 228 425 225z"/>
<path fill="#a1a3a9" d="M476 213L567 290 550 307 440 310 428 295 450 265 458 235z"/>
<path d="M345 280L382 283 378 315 350 317 335 298z"/>
<path d="M280 360L350 382 368 382 370 420 355 445 270 385 265 370z"/>
<path d="M378 413L435 408 452 420 450 432 413 445 418 470 427 502 362 455z"/>
<path fill="none" d="M203 330L430 502M93 375L115 378 130 402 150 415 185 435 215 450 215 465 200 490 207 540 205 560 190 600"/>
<path d="M243 182L262 195 268 222 255 238 232 228zM258 205L278 215 262 240 250 236zM215 215L213 245 198 262 187 250zM187 250L196 262 187 285 168 275zM165 275L177 290 155 325 136 318zM136 318L155 330 150 352 119 346 122 330zM185 283L198 290 180 320 168 320zM150 357L167 368 135 402 128 390zM215 208l12 8-8 10-8-5z" stroke-width="2.500"/>
<path d="M297 460L310 462 391 517 388 530 275 678 190 620 205 590 235 550z"/>
<path fill="#cbc6b3" d="M260 480L285 473 295 485 275 505 252 508zM232 532L235 550 215 572 198 570 210 545z"/>
</g>

<!-- lower right structures -->
<g transform="translate(540 1500)" fill="#f26d0e" stroke="#111" stroke-width="3.400" stroke-linejoin="round">
<path fill="url(#wave2)" d="M728 241L760 255 848 308 862 330 888 350 925 388 937 455 972 505 1008 524 879 909 615 820 640 775 715 722 630 640 640 600 725 515 662 483 625 465 598 418 640 350 673 292 700 275 708 255z"/>
<path d="M725 58L803 118 805 130 725 240 708 245 635 190 633 178z"/>
<path d="M570 235L610 243 673 292 670 305 620 370 575 427 487 357 488 342z"/>
<path fill="#cbc6b3" d="M580 355L617 370 620 378 578 427 548 402 550 375z"/>
<path fill="none" stroke-width="2.500" d="M490 338L520 328 555 358 550 395 537 385M575 350L574 325 592 313 645 345M610 262Q590 285 598 310M622 265Q598 290 605 312L645 345"/>
<path d="M958 246L1020 290 1020 300 970 380 955 387 886 330 885 318z"/>
<path d="M672 397L715 430 708 445 680 470 640 445 643 430z"/>
<path d="M710 440L755 480 735 518 687 472 690 455z"/>
<path d="M665 483L690 472 725 500 720 515 600 655 585 652 565 608z"/>
<path fill="#facd94" stroke-width="2" d="M650 505L680 515 705 490 715 492 700 512 678 525 650 525 635 545 632 575 640 590 630 610 618 585 602 575 602 570 625 578 632 540z"/>
<path fill="#facd94" d="M820 421L900 483 898 490 820 590 808 595 733 525z"/><path fill="#cbc6b3" stroke-width="2" d="M860 455L900 485 820 592 805 582 815 555 850 525 853 475z"/>
<path d="M630 639L714 718 712 728 663 785 650 787 575 705z"/>
<path d="M772 604L788 605 790 620 800 640 758 674 755 655z"/><path fill="none" d="M775 605L777 635 797 640"/>
<path fill="#cbc6b3" d="M387 485L475 548 473 556 380 668 370 670 290 605z"/><path fill="#facd94" stroke-width="2" d="M315 570L322 600 320 628 290 603zM343 648L370 635 418 625 380 668 370 670z"/>
<path fill="none" d="M565 608L438 757M620 640L590 680 497 777M503 685L545 715M500 688L550 712 575 685"/>
<g stroke="#111" stroke-width="4" fill="none"><path d="M708 104l8-3 1-12 4 10M679 130l8-3 1-12 4 10M692 151l8-3 1-12 4 10M715 150l8-3 1-12 4 10M665 162l8-3 1-12 4 10M680 196l8-3 1-12 4 10"/></g>
</g>

<g fill="#111"><path d="M430 1008l10-8 2-12 8 8 4-6 10 16-12-6zM378 1028l10-8 2-12 8 8 4-6 10 16-12-6zM368 1135l10-8 2-12 8 8 4-6 10 16-12-6zM438 1148l10-8 2-12 8 8 4-6 10 16-12-6zM342 1174l10-8 2-12 8 8 4-6 10 16-12-6zM404 1184l10-8 2-12 8 8 4-6 10 16-12-6zM376 1225l10-8 2-12 8 8 4-6 10 16-12-6z"/></g>

<g fill="none" stroke="#dc8fc2" stroke-width="3.400">
<path d="M876 117L862 165 838 210 825 240 792 298 752 382 710 432 820 445 910 450 960 446 1010 430 1040 390 1060 350 1095 285 1120 233 1155 210 1157 200"/>
<path stroke="#cf7a86" d="M585 897L620 940 640 953 705 1010M878 1160L800 1142 735 1140 700 1165 665 1215 652 1255 605 1315 595 1365"/>
<path d="M145 1378L200 1418 250 1445M150 1375L210 1400 250 1432M172 1450L190 1438 215 1442 215 1458 190 1482 172 1468zM302 1375L290 1420 315 1450 340 1455M250 1437L290 1470 318 1478M225 1510L262 1468 300 1485M227 1508L280 1545M207 1537L253 1580M295 1475L305 1450"/>
<path d="M1328 1118L1350 1148 1372 1158M1198 1335L1230 1310 1255 1270 1285 1235 1305 1245M1213 1383L1230 1415 1264 1455 1262 1470 1220 1510 1180 1570 1163 1605 1172 1645 1165 1680 1130 1702 1090 1680 1060 1665 1048 1645M1328 1485L1400 1548"/>
</g>
<polyline class="spots" points="738,536 788,664 610,847 763,877 532,913 698,942 724,958 829,940 985,884 1130,849 1151,916 906,299 1258,671 1288,930 1238,1003 1341,1055 1398,1048 1364,1103 1082,1118 1110,1204 1197,1231 1345,1258 1481,1229 1585,1241 1718,971 1168,1371"/>
<polyline class="spots" points="606,1030 693,1125 587,1163 412,1110 366,1212 500,1244 466,1308 430,1355 548,1367 343,1432 454,1465 410,1505 519,1530 270,1610 599,1598 636,1619 496,1667 597,1730 747,1757 811,1630 936,1530 879,1445 727,1460 745,1360 908,1354 1027,1334 1035,1290 1101,1517 965,1633 1004,1663 900,1696 893,1795 947,1832 812,1885 1056,1757 1114,1761 1176,1812 1070,1870 1061,1956 677,2022 845,2042 945,2108 1087,2096 987,2144"/>
<polyline class="spots" points="1356,1552 1446,1508 1306,1604 1304,1621 1277,1690 1352,1844 1516,1848 1231,1933 1369,1951 1402,2021 1327,2073 1417,2105 1211,2049 1093,2173 1042,2248 1230,2223 1391,2311 1224,1472"/>
</svg>
</section>
</main>

<footer class="status"><span class="msg">0 elementi selezionati dal layer Unita' Stratigrafiche.</span>
<span class="sbtn"><svg viewBox="0 0 20 18"><ellipse cx="8" cy="6" rx="3" ry="5" fill="none" stroke="#222" stroke-width="1.600" transform="rotate(-30 8 6)"/><ellipse cx="12" cy="12" rx="4" ry="4.500" fill="none" stroke="#222" stroke-width="1.600"/><path d="M6 4l8 9M12 5l4-3" stroke="#222"/></svg></span>
<span class="coord">Coordinata:</span><span class="field c1">2296820.772,4922252.487</span><span class="scala">Scala</span><span class="field c2">1:24</span>
<span class="sbtn b2"><svg viewBox="0 0 20 18"><path d="M18 2q-3 10-8 15l-4-1q6-3 12-14z" fill="#555"/><circle cx="7" cy="6" r="4.500" fill="#fff" stroke="#d2222a" stroke-width="1.600"/><path d="M4 3l6 6" stroke="#d2222a" stroke-width="1.600"/></svg></span>
<i class="chk"></i><span class="agg">Aggiorna</span><span class="epsg">EPSG:3004</span>
<span class="sbtn b3"><svg viewBox="0 0 20 18"><g fill="none" stroke="#777" stroke-width="2"><circle cx="10" cy="9" r="6.500"/><ellipse cx="10" cy="9" rx="3" ry="7"/><path d="M2 9h16M5 6h10M5 12h10"/></g></svg></span>
<svg class="grip" viewBox="0 0 10 10"><path d="M0 10L10 0M4 10l6-6M8 10l2-2" stroke="#888"/></svg></footer>
</div>

<div class="dialog">
<div class="dlg-title"><div class="lights color"><i></i><i></i><i></i></div><span class="dlg-name"><svg><use href="#us14"/></svg>pyArchInit Gestione Scavi – Scheda US</span></div>
<div class="dlg-body">
<section class="dbms">
<div class="nav-left"><h3>DBMS Toolbar</h3>
<div class="brow"><button class="pill w50"><svg viewBox="0 0 24 24"><path d="M5 3h4v18H5zM19 2v20L8 12z" fill="url(#leaf)"/></svg></button><button class="pill w75"><svg viewBox="0 0 24 24"><path d="M17 2v20L6 12z" fill="url(#leaf)"/></svg></button></div>
<div class="brow"><button class="pill w55"><svg class="soft" viewBox="0 0 24 24"><path d="M2 5h15v17H2z" fill="#f5efe6" stroke="#ccc"/><path d="M5 9l5 6M10 9l-5 6" stroke="#d33" stroke-width="2"/><path d="M10 17L22 5" stroke="#f0a640" stroke-width="3"/></svg></button></div></div>
<div class="nav-right"><button class="pill reload">Reload DB</button>
<div class="brow"><button class="pill"><svg viewBox="0 0 24 24"><path d="M7 2v20l11-10z" fill="url(#leaf)"/></svg></button><button class="pill"><svg viewBox="0 0 24 24"><path d="M5 2v20l11-10zM15 3h4v18h-4z" fill="url(#leaf)"/></svg></button><button class="pill"><svg class="soft" viewBox="0 0 24 24"><path d="M2 5h15v17H2z" fill="#f5efe6" stroke="#ddd"/><path d="M10 15L22 3" stroke="#f0a640" stroke-width="3"/></svg></button><button class="pill"><svg viewBox="0 0 24 24"><path d="M1 2h22v20H1z" fill="#34347e"/><path d="M6 2h12v9H6zM7 15h10v7H7z" fill="#e6e8f4"/><path d="M13 16h2v4h-2z" fill="#34347e"/></svg></button></div>
<div class="brow"><button class="pill"><svg viewBox="0 0 24 24"><circle cx="11" cy="5" r="5.500" fill="#1ba0e2"/><text x="-2" y="24" font-size="12.500" font-weight="bold" fill="#2a9fd6" font-family="Noto Sans">New</text></svg></button><button class="pill hot"><svg viewBox="0 0 24 24"><path d="M0 -3h26v30H0z" fill="#fff" opacity=".6"/><circle cx="11" cy="5" r="5.500" fill="#1ba0e2"/><text x="2" y="24" font-size="12.500" font-weight="bold" fill="#1f8fc9" font-family="Noto Sans">Go</text></svg></button><button class="pill"><svg class="soft" viewBox="0 0 24 24"><path d="M2 8l6-4 4 3h10v14H2z" fill="#ddd" stroke="#bbb"/></svg></button><button class="pill"><svg viewBox="0 0 24 24"><circle cx="12" cy="5" r="5.500" fill="#1ba0e2"/><path d="M8 12l-3 8M14 14l4 8" stroke="#ccc" stroke-width="2"/></svg></button></div></div>
<div class="dbinfo"><h3>DB Info</h3>
<div class="two"><span>Status</span><span>Ordinamento</span></div>
<div class="two vals"><b class="lcd">Usa</b><b class="lcd">Non ordinati</b></div>
<div class="rec"><span>record n.</span><i class="lcd">191</i></div>
<div class="rec"><span>record tot.</span><i class="lcd">31</i></div></div>
</section>

<section class="keys"><div class="combo off k1"><span>Via Cavour 60, Ravenna</span><i>▼</i></div><div class="combo off k2"><span>1</span><i>▼</i></div><div class="text k3">121</div></section>
<section class="keylabels"><span>Sito</span><span>Area</span><span>US</span></section>
<section class="defs-row"><div class="combo on d1"><span>Strato di carbone e cenere</span><i>▼</i></div><div class="combo d2"><span>Scarti di fornace</span><i>▼</i></div></section>
<section class="deflabels"><span>Definizione stratigrafica</span><span>Definizione Interpretata</span></section>

<section class="tabs"><span>Dati...</span><span>Periodizzazione – Rapporti...</span><span>Dati Fisici – Dati...</span><span>Docu...</span><span class="cur">Tools</span><span>Piante</span><span>Media</span></section>
<section class="panel">
<h2>Tools</h2>
<div class="heads"><h3>Crea Codice Perio</h3><h3></h3><h3>Esporta Matrix</h3></div>
<div class="cols r1"><button class="pill m1"><svg><use href="#page"/></svg>Crea codice periodo</button><button class="pill m2">Ordine Stratigrafico</button><button class="pill m3"><svg><use href="#page"/></svg>export Matrix</button></div>
<div class="cols r2"><div class="text">4/5/6/7</div><div class="text">140</div></div>
<div class="heads"><h3>Visualizzazione G</h3><h3>Visualizza US</h3><h3>Attivazione Preview pianta US</h3></div>
<div class="cols r3"><button class="flat"><svg viewBox="0 0 24 24"><path d="M1 1h20v21H1z" fill="#d8d2a0"/><circle cx="11" cy="11" r="8" fill="#2b7fc4"/><path d="M6 6l6 1 2 6-4 4-4-5z" fill="#5fae48"/><path d="M14 12l8-8v18h-6z" fill="#cdbb6a"/></svg></button><button class="pill m2"><svg><use href="#page"/></svg>Visualizza US</button><button class="flat pv">Preview pianta US</button><button class="flat hd"><svg><use href="#hand"/></svg></button></div>
<h3 class="s1">Apri schede US selezionate</h3>
<div class="cols r4"><button class="pill m4"><svg><use href="#page"/></svg>apri schede US</button></div>
<h3 class="s2">Esportazioni PDF</h3>
<div class="cols r5"><button class="pill m4"><svg><use href="#page"/></svg>Singole schede US</button><button class="pill m5"><svg><use href="#page"/></svg>Elenco US</button></div>
<h3 class="s3">Mostra immagini</h3>
<div class="cols r6"><button class="flat"><svg><use href="#camera"/></svg></button></div>
<h3 class="s4">Controlla rapporti stratigrafici</h3>
<div class="cols r7"><div class="popup"><span>Via A. Costa, Rimini</span><i>▲<br>▼</i></div><button class="pill hot m6"><svg class="paper"><use href="#page"/></svg>Check, go!!!!</button></div>
</section>
</div>
<svg class="grip" viewBox="0 0 10 10"><path d="M0 10L10 0M4 10l6-6M8 10l2-2" stroke="#888"/></svg>
</div>
</body>
</html>
```
FILE: styles.css
```css
* { box-sizing: border-box; }
body { margin: 0; width: 2560px; height: 1419px; overflow: hidden; background: #05050a; font-family: "Open Sans", "Noto Sans", sans-serif; color: #000; position: relative; }
ul { margin: 0; padding: 0; list-style: none; }
h2, h3 { margin: 0; }
i { font-style: normal; }
.defs { position: absolute; }
.window { margin-left: 4px; padding-top: 1px; height: 1419px; display: flex; flex-direction: column; }
.titlebar { height: 22px; flex: none; display: grid; grid-template-columns: 1fr auto 1fr; align-items: center; background: linear-gradient(#f0f0f0, #d6d6d6); border-bottom: 1px solid #8d8d8d; border-radius: 5px 5px 0 0; }
.win-title { font-size: 13.500px; line-height: 20px; color: #555; }
.lights { display: flex; gap: 7px; padding-left: 8px; }
.lights i { width: 14px; height: 14px; border-radius: 50%; border: 1px solid #9a9a9a; background: linear-gradient(#c4c4c4, #f0f0f0); }

/* toolbars */
.toolbar { flex: none; background: linear-gradient(#ececec, #c6c6c6); border-bottom: 1px solid #a5a5a5; border-top: 1px solid #f6f6f6; }
.main-tools { height: 36px; padding-left: 7px; display: grid; grid-template-columns: 506px 237px 274px 313px 465px 389px 247px 63px 48px; }
.label-tools { height: 36px; padding-left: 7px; display: grid; grid-template-columns: 162px 200px; }
.group { display: flex; align-items: center; gap: 12px; min-width: 0; }
.group svg { width: 26px; height: 23px; flex: none; overflow: visible; }
.g1 { gap: 11.8px; }
.handle { width: 5px; height: 24px; margin-right: -9px; flex: none; background: radial-gradient(circle at 1.500px 1.500px, #fff 1.300px, transparent 1.600px) 0 0 / 5px 5px, radial-gradient(circle at 3.500px 3.500px, #aaa 1px, transparent 1.300px) 0 0 / 5px 5px; }
.g1 .handle { margin-right: -7px; }
.sep { width: 1px; height: 31px; margin: 0 -2px 0 -1px; border-left: 1px dashed #777; }
.dim { opacity: .55; }
.flip { transform: scaleX(-1); }
.group.g7 { gap: 0; }
.g7 .handle { margin-right: 2px; }
.pressed { width: 45px; height: 34px; margin: 0 7px 0 14px; display: flex; align-items: center; flex: none; padding-left: 10px; background: linear-gradient(#b2b2b2, #8d8d8d); border: 1px solid #909090; }
.pressed b, .drop { font-size: 10px; color: #555; width: 8px; margin-top: 10px; }
.pressed svg { width: 25px; }
.g7 > svg + svg { margin-left: 12px; }
.g7 .wide { margin-left: 17px; }
.drop { margin-left: 1px; }
.more { font-size: 19px; color: #777; line-height: 20px; margin: -4px 0 0 12px; font-weight: 600; }
.g8 .more { margin-left: -4px; }
.g8 .last { margin-left: -1px; }

/* layer dock */
.work { flex: 1; display: flex; min-height: 0; }
.layers { width: 281px; background: #fff; border-right: 1px solid #858585; border-bottom: 1px solid #b5b5b5; }
.dock-head { height: 27px; display: flex; align-items: center; gap: 7px; background: linear-gradient(#efefef, #cfcfcf); border-bottom: 1px solid #858585; font-size: 11.500px; padding-right: 4px; }
.dock-head span { flex: 1; padding-left: 104px; }
.dock-head svg { width: 14px; height: 14px; }
.layers li { height: 22px; display: flex; align-items: center; padding-left: 8px; font: bold 10px "Liberation Sans", Arial, sans-serif; }
.layers .sel { background: #cdcdcd; }
.tri { border: 4px solid transparent; border-left: 8px solid #8a8a8a; border-right: 0; }
.box { width: 14px; height: 14px; margin: 0 13px 0 12px; border: 1px solid #b9b9b9; border-radius: 2px; background: linear-gradient(#fff, #eee); position: relative; flex: none; }
.on.box::after, .chk::after { content: ""; position: absolute; left: 5px; top: -3px; width: 4px; height: 11px; border: solid #808080; border-width: 0 2px 2px 0; transform: rotate(35deg); }
.lay { width: 18px; height: 18px; margin-right: 8px; flex: none; overflow: visible; }
.dark { color: #666; }
.slate { color: #717a87; }

/* map */
.canvas { flex: 1; background: #fff; padding: 225px 0 0 535px; overflow: hidden; }
.map { display: block; overflow: visible; }
.spots { fill: none; stroke: none; marker: url(#cross); }

/* status bar */
.status { height: 32px; flex: none; background: #ebebeb; display: flex; align-items: center; font: 9px "Liberation Sans", Arial, sans-serif; }
.msg { width: 1830px; padding-left: 6px; flex: none; }
.sbtn { width: 20px; height: 19px; border: 1px solid #aaa; background: #e2e2e2; margin: 0 9px 0 6px; flex: none; display: flex; }
.sbtn svg { width: 18px; height: 17px; }
.coord { width: 56px; }
.field { height: 20px; background: #fff; border: 1px solid #c4c4c4; border-top: 2px solid #888; line-height: 19px; }
.c1 { width: 300px; text-align: center; }
.scala { width: 41px; padding-left: 9px; }
.c2 { width: 100px; padding-left: 4px; }
.b2 { margin: 0 7px 0 7px; }
.chk { width: 14px; height: 14px; border: 1px solid #777; border-radius: 2px; background: #fff; position: relative; margin-right: 3px; }
.chk::after { border-color: #222; }
.agg { width: 42px; }
.epsg { width: 50px; color: #333; }
.b3 { margin: 0 16px 0 6px; }
.grip { width: 10px; height: 10px; align-self: flex-end; }

/* form window */
.dialog { position: absolute; left: 1579px; top: 318px; width: 592px; height: 862px; background: #ececec; border-radius: 5px 5px 0 0; box-shadow: 0 14px 28px 4px rgba(0,0,0,.5), 0 0 2px 1px rgba(0,0,0,.35); }
.dlg-title { height: 23px; display: grid; grid-template-columns: 1fr auto 1fr; align-items: center; background: linear-gradient(#d2d2d2, #a3a3a3); border-bottom: 1px solid #4e4e4e; border-radius: 5px 5px 0 0; padding-top: 1px; }
.dlg-name { display: flex; align-items: center; gap: 5px; font-size: 13.500px; line-height: 20px; margin-right: 6px; }
.dlg-name svg { width: 15px; height: 15px; }
.color i:nth-child(1) { background: linear-gradient(#b01515, #e03030 50%, #ffa8a0); }
.color i:nth-child(3) { background: linear-gradient(#35801a, #6db43a 50%, #c9f595); }
.dlg-body { padding: 0 20px; }
h3 { font-size: 12.800px; letter-spacing: .3px; line-height: 16px; font-weight: 700; white-space: nowrap; }
.dbms { height: 135px; display: flex; border-bottom: 1px solid #a8a8a8; box-shadow: 0 1px #fff; }
.nav-left { width: 201px; padding-top: 33px; }
.nav-left h3 { margin-bottom: 10px; }
.nav-left .brow { margin-left: 6px; }
.brow { display: flex; gap: 5px; height: 21px; margin-bottom: 9px; }
.pill { border: 1px solid #666; border-radius: 11px; height: 21px; padding: 0; margin: 0; display: flex; align-items: center; justify-content: center; background: linear-gradient(#fff, #f5f5f5 45%, #e6e6e6 50%, #fff); box-shadow: 0 1px 1px rgba(0,0,0,.25); font: 9.800px "Open Sans", sans-serif; color: #000; white-space: nowrap; }
.pill.hot { background: linear-gradient(#a3c5ee, #7fb2e6 45%, #5c9bdb 50%, #a9dcfb); border-color: #2c4a9a; }
.brow .pill { width: 50px; }
.brow .w75 { width: 75px; }
.brow .w55 { width: 55px; }
.pill svg { width: 15px; height: 14px; margin-right: 6px; }
.brow .pill svg { width: 15px; height: 14px; margin: 0; overflow: visible; }
.soft { opacity: .75; }
.nav-right { padding-top: 30px; width: 231px; }
.nav-right .reload { width: 208px; margin: 0 0 7px 13px; height: 22px; font-size: 13px; }
.dbinfo { border-left: 1px solid #a8a8a8; box-shadow: inset 1px 0 #fff; height: 105px; margin-top: 26px; padding: 6px 0 0 6px; width: 120px; font-size: 10px; font-weight: 600; line-height: 14px; }
.two { display: grid; grid-template-columns: 39px 68px; gap: 6px; margin-top: 9px; white-space: nowrap; }
.two.vals { margin-top: 3px; }
.lcd { border: 1px solid #bbb; border-color: #bbb #fff #fff #bbb; text-align: center; font-size: 10.500px; font-weight: 600; line-height: 13px; height: 14px; background: #eee; }
.rec { display: flex; justify-content: space-between; align-items: center; margin-top: 5px; height: 16px; }
.rec .lcd { width: 54px; height: 16px; font: 12px/15px "Liberation Sans", sans-serif; text-align: left; padding-left: 4px; }
.keys { display: flex; padding: 24px 0 0 3px; align-items: flex-start; }
.combo { height: 21px; display: flex; background: #fff; border: 1px solid #8f8f8f; border-radius: 0 4px 4px 0; font-size: 10.500px; font-weight: 600; line-height: 20px; }
.combo span { flex: 1; padding-left: 3px; }
.combo i { width: 17px; text-align: center; font-size: 10px; line-height: 18px; background: linear-gradient(#b9d6f5, #6fa9e4 50%, #bff0ff); border-left: 1px solid #7798c8; border-radius: 0 3px 3px 0; }
.combo.off { border-color: #bbb; color: #444; margin-top: 2px; }
.combo.off i { background: linear-gradient(#fff, #eaeaea); border-color: #bbb; color: #777; }
.combo.on { box-shadow: 0 0 0 2px #6ba3dd, 0 0 3px 3px #a9cbee; }
.k1 { width: 355px; }
.k2 { width: 58px; margin-left: 10px; }
.k3 { width: 116px; margin-left: 10px; height: 22px; font-size: 12px; color: #444; font-weight: 600; letter-spacing: .5px; }
.text { background: #fff; border: 1px solid #d9d9d9; border-top-color: #aaa; line-height: 21px; padding-left: 3px; }
.keylabels, .deflabels { display: grid; font-size: 13.200px; line-height: 18px; }
.keylabels { grid-template-columns: 339px 100px 80px; padding-top: 15px; }
.defs-row { display: flex; gap: 11px; padding: 17px 0 0 3px; }
.d1 { width: 304px; }
.d2 { width: 231px; }
.deflabels { grid-template-columns: 315px 200px; padding: 8px 0 0 3px; }
.tabs { display: grid; grid-template-columns: 51px 166px 114px 58px 52px 54px 52px; width: 549px; height: 21px; margin: 8px 0 0 1px; border: 1px solid #777; border-radius: 5px; background: linear-gradient(#fff, #f4f4f4 45%, #e6e6e6 50%, #fff); font-size: 10.600px; line-height: 19px; text-align: center; text-indent: -2px; overflow: hidden; position: relative; }
.tabs span + span { border-left: 1px solid #b9b9b9; }
.tabs .cur { background: linear-gradient(#a9cdf3, #79b2e9 50%, #b5f2ff); }
.panel { margin-top: -11px; width: 552px; height: 522px; background: #e5e5e5; border: 1px solid #c9c9c9; border-radius: 4px; padding: 28px 0 0 22px; }
.panel h2 { font-size: 17.500px; line-height: 22px; letter-spacing: .3px; }
.cols { display: flex; }
.heads { display: grid; grid-template-columns: 147px 130px 240px; margin-top: 12px; }
.heads h3 { height: 16px; }
.r1 { margin-top: 16px; }
.m1 { width: 133px; margin-right: 14px; }
.m2 { width: 116px; margin-right: 14px; }
.m3 { width: 138px; }
.m4 { width: 119px; margin-right: 14px; }
.m5 { width: 130px; }
.r2 { margin-top: 19px; gap: 28px; }
.r2 .text { width: 119px; height: 21px; font-size: 10.500px; color: #333; }
.r2 .text + .text { width: 115px; }
.r2 + .heads { margin-top: 14px; }
.r3 { margin-top: 14px; align-items: center; height: 26px; }
.flat { width: 109px; height: 26px; padding: 0; border: 1px solid #999; background: linear-gradient(#fff, #f0f0f0); display: flex; align-items: center; justify-content: center; font: 11.300px "Open Sans", sans-serif; }
.flat svg { width: 15px; height: 15px; }
.r3 .m2 { margin-left: 38px; margin-top: 1px; }
.pv { width: 110px; height: 23px; }
.hd { margin-left: 10px; }
.s1 { margin-top: 17px; }
.r4 { margin-top: 16px; }
.s2 { margin-top: 16px; }
.r5 { margin-top: 15px; }
.s3 { margin-top: 17px; }
.r6 { margin-top: 11px; }
.s4 { margin-top: 14px; }
.r7 { margin-top: 14px; }
.popup { width: 335px; height: 21px; margin-right: 4px; display: flex; border: 1px solid #777; border-radius: 4px; background: linear-gradient(#fff, #f4f4f4 45%, #e6e6e6 50%, #fff); font-size: 11px; font-weight: 600; line-height: 19px; overflow: hidden; box-shadow: 0 1px 1px rgba(0,0,0,.3); }
.popup span { flex: 1; padding-left: 7px; }
.popup i { width: 20px; font-size: 8px; line-height: 9px; text-align: center; background: linear-gradient(#b9d6f5, #6fa9e4 50%, #bff0ff); }
.m6 { width: 167px; }
.paper { background: #fff; }
.dialog > .grip { position: absolute; right: 2px; bottom: 2px; }
```
